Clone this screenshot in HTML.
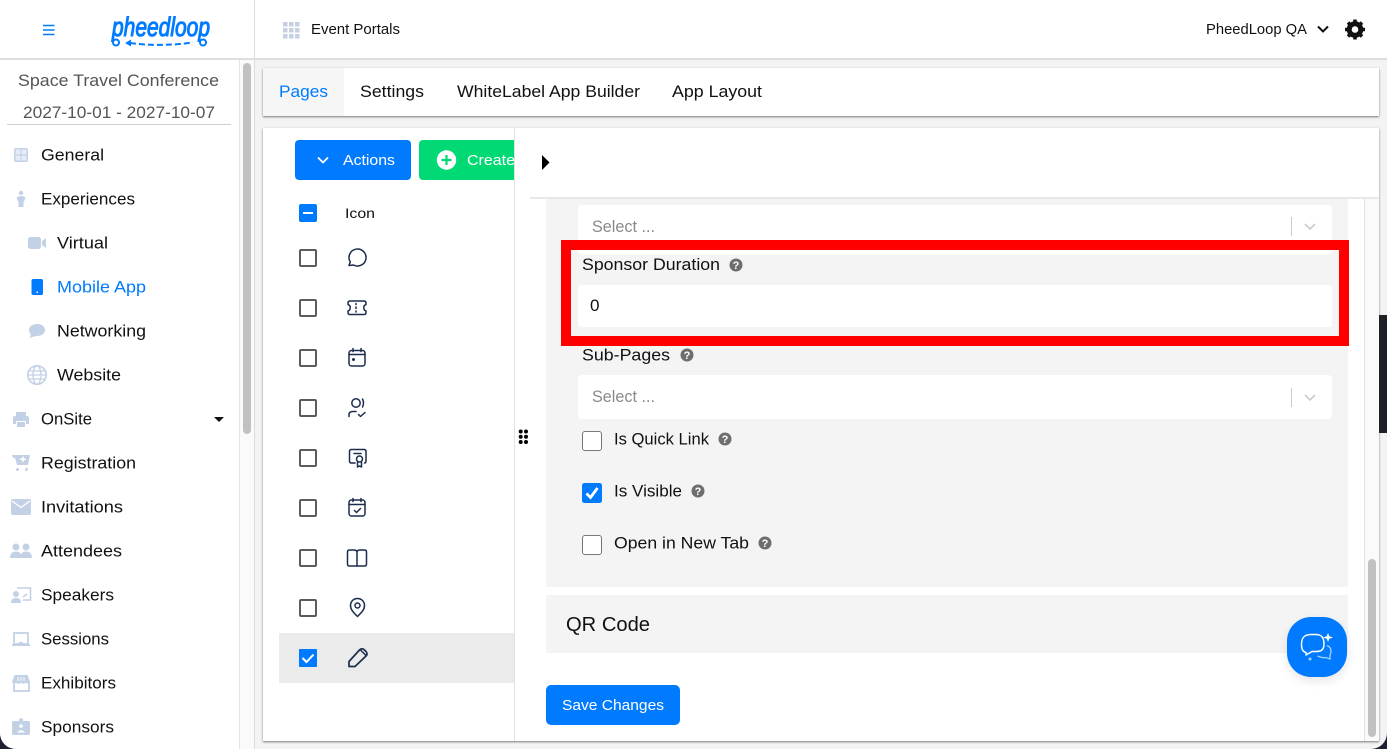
<!DOCTYPE html>
<html lang="en">
<head>
<meta charset="utf-8">
<title>Event Portals</title>
<style>
html,body{margin:0;padding:0;width:1387px;height:749px;overflow:hidden;background:#1d2030}
.b{position:absolute;box-sizing:border-box}
#page{position:absolute;left:0;top:0;width:1387px;height:749px;background:#f3f3f3;border-radius:0 0 16px 16px;overflow:hidden}
svg{position:absolute;left:0;top:0}
text{font-family:"Liberation Sans",sans-serif;font-size:16.5px;fill:#111}
.s14{font-size:14.5px}
.blue{fill:#007bff}
.w{fill:#fff}
.g{fill:#8a8a8a}
.ev{fill:#555}
.i{fill:#c3d1e6;stroke:none}
.o{fill:none;stroke:#c3d1e6;stroke-width:1.8}
.r{fill:none;stroke:#1c2c4c;stroke-width:1.5;stroke-linecap:round;stroke-linejoin:round}
.cb{fill:#fff;stroke:#5c5c5c;stroke-width:2}
.cf{fill:#fff;stroke:#777;stroke-width:1}
</style>
</head>
<body>
<div id="page">
  <div class="b" style="left:0;top:0;width:1387px;height:60px;background:#fff;border-bottom:2px solid #dedede"></div>
  <div class="b" style="left:254px;top:0;width:1px;height:749px;background:#dcdcdc"></div>
  <div class="b" style="left:0;top:60px;width:240px;height:689px;background:#fff;border-right:1px solid #e4e4e4"></div>
  <div class="b" style="left:240px;top:60px;width:14px;height:689px;background:#fafafa"></div>
  <div class="b" style="left:243px;top:63px;width:8px;height:371px;background:#c1c1c1;border-radius:4px"></div>
  <div class="b" style="left:7px;top:124px;width:224px;height:1px;background:#cfcfcf"></div>

  <div class="b" style="left:263px;top:68px;width:1116px;height:48px;background:#fff;box-shadow:0 1px 2px rgba(0,0,0,.5)"></div>
  <div class="b" style="left:263px;top:68px;width:81px;height:48px;background:#f6f6f6"></div>

  <div class="b" style="left:263px;top:128px;width:1116px;height:613px;background:#fff;box-shadow:0 1px 2px rgba(0,0,0,.5);overflow:hidden">
    <div class="b" style="left:32px;top:12px;width:116px;height:40px;background:#007bff;border-radius:4px"></div>
    <div class="b" style="left:156px;top:12px;width:100px;height:40px;background:#00d974;border-radius:4px"></div>
    <div class="b" style="left:16px;top:505px;width:235px;height:50px;background:#ebebeb"></div>
    <div class="b" style="left:251px;top:0;width:1px;height:613px;background:#e2e2e2"></div>
    <div class="b" style="left:252px;top:0;width:864px;height:613px;background:#fff"></div>
    <div class="b" style="left:267px;top:69px;width:849px;height:2px;background:#e8e8e8"></div>
    <div class="b" style="left:283px;top:71px;width:802px;height:388px;background:#f4f4f4"></div>
    <div class="b" style="left:315px;top:77px;width:754px;height:50px;background:#fff;border-radius:4px"></div>
    <div class="b" style="left:315px;top:157px;width:754px;height:42px;background:#fff;border-radius:3px"></div>
    <div class="b" style="left:315px;top:247px;width:754px;height:44px;background:#fff;border-radius:4px"></div>
    <div class="b" style="left:283px;top:467px;width:802px;height:58px;background:#f4f4f4"></div>
    <div class="b" style="left:283px;top:557px;width:134px;height:40px;background:#007bff;border-radius:5px"></div>
    <div class="b" style="left:1101px;top:71px;width:15px;height:542px;background:#fafafa;border-left:1px solid #e2e2e2"></div>
    <div class="b" style="left:1105px;top:431px;width:8px;height:178px;background:#c1c1c1;border-radius:4px"></div>
  </div>

  <div class="b" style="left:561px;top:240px;width:788px;height:106px;border:10px solid #f00"></div>
  <div class="b" style="left:1379px;top:315px;width:8px;height:118px;background:#1d2025"></div>
  <div class="b" style="left:1287px;top:617px;width:60px;height:60px;background:#007bff;border-radius:24px;box-shadow:0 4px 10px rgba(0,0,0,.1)"></div>

  <svg width="1387" height="749" viewBox="0 0 1387 749" xmlns="http://www.w3.org/2000/svg">
    <defs><clipPath id="cl"><rect x="263" y="128" width="251" height="100"/></clipPath></defs>

    <!-- header -->
    <path d="M43 25.500H54.500M43 30H54.500M43 34.500H54.500" stroke="#007bff" stroke-width="1.600" fill="none"/>
    <text x="112" y="36" textLength="98" lengthAdjust="spacingAndGlyphs" style="font-style:italic;font-size:27px;fill:#007bff;stroke:#007bff;stroke-width:1.100">pheedloop</text>
    <circle cx="116" cy="42.500" r="3" fill="none" stroke="#007bff" stroke-width="2"/>
    <circle cx="203" cy="42.500" r="3" fill="none" stroke="#007bff" stroke-width="2"/>
    <path d="M130 43Q160 47 193 42.500" fill="none" stroke="#007bff" stroke-width="2" stroke-dasharray="6 3"/>
    <path d="M125 43L131 39.500V46.500Z" fill="#007bff"/>
    <g fill="#c6d0e0">
      <rect x="283" y="22" width="4.500" height="4.500"/><rect x="289" y="22" width="4.500" height="4.500"/><rect x="295" y="22" width="4.500" height="4.500"/>
      <rect x="283" y="28" width="4.500" height="4.500"/><rect x="289" y="28" width="4.500" height="4.500"/><rect x="295" y="28" width="4.500" height="4.500"/>
      <rect x="283" y="34" width="4.500" height="4.500"/><rect x="289" y="34" width="4.500" height="4.500"/><rect x="295" y="34" width="4.500" height="4.500"/>
    </g>
    <text class="s14" x="311" y="34" textLength="89" lengthAdjust="spacingAndGlyphs">Event Portals</text>
    <text class="s14" x="1206" y="34" textLength="101" lengthAdjust="spacingAndGlyphs">PheedLoop QA</text>
    <path d="M1318 26.500L1323 31.500L1328 26.500" fill="none" stroke="#111" stroke-width="2"/>
    <g transform="translate(1355 29.500)">
      <circle r="5.800" fill="none" stroke="#111" stroke-width="5"/>
      <g stroke="#111" stroke-width="3.600">
        <path d="M0-10V-6M0 10V6M-10 0H-6M10 0H6M-7-7L-4-4M7 7L4 4M-7 7L-4 4M7-7L4-4"/>
      </g>
    </g>

    <!-- event -->
    <text class="ev" x="18" y="86" textLength="201" lengthAdjust="spacingAndGlyphs">Space Travel Conference</text>
    <text class="ev" x="23" y="118" textLength="192" lengthAdjust="spacingAndGlyphs">2027-10-01 - 2027-10-07</text>

    <!-- nav text -->
    <text x="41" y="160.500" textLength="63" lengthAdjust="spacingAndGlyphs">General</text>
    <text x="41" y="204.500" textLength="94" lengthAdjust="spacingAndGlyphs">Experiences</text>
    <text x="57" y="248.500" textLength="51" lengthAdjust="spacingAndGlyphs">Virtual</text>
    <text class="blue" x="57" y="292.500" textLength="89" lengthAdjust="spacingAndGlyphs">Mobile App</text>
    <text x="57" y="336.500" textLength="89" lengthAdjust="spacingAndGlyphs">Networking</text>
    <text x="57" y="380.500" textLength="64" lengthAdjust="spacingAndGlyphs">Website</text>
    <text x="41" y="424.500" textLength="51" lengthAdjust="spacingAndGlyphs">OnSite</text>
    <text x="41" y="468.500" textLength="95" lengthAdjust="spacingAndGlyphs">Registration</text>
    <text x="41" y="512.500" textLength="82" lengthAdjust="spacingAndGlyphs">Invitations</text>
    <text x="41" y="556.500" textLength="81" lengthAdjust="spacingAndGlyphs">Attendees</text>
    <text x="41" y="600.500" textLength="73" lengthAdjust="spacingAndGlyphs">Speakers</text>
    <text x="41" y="644.500" textLength="68" lengthAdjust="spacingAndGlyphs">Sessions</text>
    <text x="41" y="688.500" textLength="75" lengthAdjust="spacingAndGlyphs">Exhibitors</text>
    <text x="41" y="732.500" textLength="73" lengthAdjust="spacingAndGlyphs">Sponsors</text>

    <!-- nav icons -->
    <rect class="i" x="14" y="148" width="14" height="14" rx="2"/>
    <path d="M15.500 154.400H20.400V149.500H15.500ZM21.600 149.500V154.400H26.500V149.500ZM15.500 155.600V160.500H20.400V155.600ZM21.600 155.600V160.500H26.500V155.600Z" fill="#e6edf6"/>
    <circle class="i" cx="21" cy="193" r="2.200"/>
    <path class="i" d="M16.500 197.500Q21 194.500 25.500 197.500L24 201.500H23.500V207H18.500V201.500H18Z"/>
    <rect class="i" x="28" y="237" width="13" height="12" rx="2.500"/>
    <path class="i" d="M42 241L46 238V248L42 245Z"/>
    <rect class="blue" style="stroke:none" x="31.500" y="279" width="11.500" height="16" rx="1.800"/>
    <rect x="36.500" y="291.500" width="1.500" height="1.500" fill="#fff"/>
    <path class="i" d="M37 324C41.500 324 45 326.500 45 330C45 333.500 41.500 336 37 336L34 336.500L29.500 338L31 334.500C29.800 333.300 29 331.800 29 330C29 326.500 32.500 324 37 324Z"/>
    <circle cx="37" cy="375" r="9.200" fill="none" stroke="#c3d1e6" stroke-width="1.600"/>
    <ellipse cx="37" cy="375" rx="4" ry="9.200" fill="none" stroke="#c3d1e6" stroke-width="1.300"/>
    <path d="M28 375H46M29 371H45M29 379H45" stroke="#c3d1e6" stroke-width="1.200"/>
    <path class="i" d="M16 412H26V416H16ZM13 418Q13 416 15 416H27Q29 416 29 418V424H26V421H16V424H13Z"/>
    <rect class="i" x="17" y="422" width="8" height="5"/>
    <path d="M214 417H224L219 422Z" fill="#111"/>
    <path class="i" d="M12 455H30L28 465H17L15 458H13Z"/>
    <path d="M23 456.500V462M20 459.300H26" stroke="#fff" stroke-width="1.500"/>
    <circle class="i" cx="17.500" cy="469.500" r="1.500"/><circle class="i" cx="26.500" cy="469.500" r="1.500"/>
    <rect class="i" x="11" y="499" width="20" height="16" rx="2"/>
    <path d="M12 501L21 507.500L30 501" fill="none" stroke="#fff" stroke-width="1.300"/>
    <circle class="i" cx="16" cy="547" r="3.500"/><circle class="i" cx="26" cy="547" r="3.500"/>
    <path class="i" d="M10 558C10 553 13 551.500 16 551.500C19 551.500 21 553 21 555C21 553 23 551.500 26 551.500C29 551.500 32 553 32 558Z"/>
    <path d="M17 588H30.500V600H23" fill="none" stroke="#c3d1e6" stroke-width="1.600"/>
    <path d="M23 597L27 594" stroke="#c3d1e6" stroke-width="1.600"/>
    <circle class="i" cx="16" cy="594" r="3"/>
    <path class="i" d="M11 603C11 599 13 598 16 598C19 598 21 599 21 603Z"/>
    <rect class="o" x="14" y="633" width="14" height="11"/>
    <rect class="i" x="12" y="644" width="18" height="2"/>
    <rect class="i" x="19" y="642" width="4" height="1"/>
    <path d="M14 682V691H29V682" fill="none" stroke="#c3d1e6" stroke-width="1.800"/>
    <path class="i" d="M14.500 675H27.500L30 682Q28 685 26 682.500Q24 685 21 682.500Q18 685 16 682.500Q14 685 12 682Z"/>
    <path d="M18 677V681M21 677V681M24 677V681" stroke="#fff" stroke-width="1"/>
    <rect class="i" x="12" y="721" width="18" height="14" rx="1.500"/>
    <rect class="i" x="19" y="718.500" width="4" height="3"/>
    <circle cx="21" cy="726" r="1.800" fill="#fff"/>
    <path d="M17 732.500Q21 728 25 732.500Z" fill="#fff"/>

    <!-- tabs -->
    <text class="blue" x="279" y="97" textLength="49" lengthAdjust="spacingAndGlyphs">Pages</text>
    <text x="360" y="97" textLength="64" lengthAdjust="spacingAndGlyphs">Settings</text>
    <text x="457" y="97" textLength="183" lengthAdjust="spacingAndGlyphs">WhiteLabel App Builder</text>
    <text x="672" y="97" textLength="90" lengthAdjust="spacingAndGlyphs">App Layout</text>

    <!-- action buttons -->
    <path d="M318 157.500L323 162.500L328 157.500" fill="none" stroke="#fff" stroke-width="1.800"/>
    <text class="s14 w" x="343" y="165" textLength="52" lengthAdjust="spacingAndGlyphs">Actions</text>
    <circle cx="446.500" cy="160" r="9.700" fill="#fff"/>
    <path d="M446.500 155V165M441.500 160H451.500" stroke="#00d974" stroke-width="2.200"/>
    <text class="s14 w" x="467" y="165" textLength="48" lengthAdjust="spacingAndGlyphs" clip-path="url(#cl)">Create</text>

    <!-- list -->
    <rect x="299" y="204" width="18" height="18" rx="2" fill="#007bff"/>
    <rect x="303" y="212" width="10" height="2" fill="#fff"/>
    <text x="345" y="218" style="font-size:14px" textLength="30" lengthAdjust="spacingAndGlyphs">Icon</text>
    <rect class="cb" x="300" y="250" width="16" height="16" rx="1"/>
    <rect class="cb" x="300" y="300" width="16" height="16" rx="1"/>
    <rect class="cb" x="300" y="350" width="16" height="16" rx="1"/>
    <rect class="cb" x="300" y="400" width="16" height="16" rx="1"/>
    <rect class="cb" x="300" y="450" width="16" height="16" rx="1"/>
    <rect class="cb" x="300" y="500" width="16" height="16" rx="1"/>
    <rect class="cb" x="300" y="550" width="16" height="16" rx="1"/>
    <rect class="cb" x="300" y="600" width="16" height="16" rx="1"/>
    <rect x="299" y="649" width="18" height="18" rx="1" fill="#007bff"/>
    <path d="M302.500 658L306.500 662L313.500 654.500" fill="none" stroke="#fff" stroke-width="2"/>

    <!-- list icons -->
    <path class="r" d="M349 265.500L350.300 262A8.500 8.500 0 1 1 353.500 265Z"/>
    <path class="r" d="M350 301H364Q366 301 366 303V304.500C363 305.500 363 310 366 311V312.500Q366 314.500 364 314.500H350Q348 314.500 348 312.500V311C351 310 351 305.500 348 304.500V303Q348 301 350 301Z"/>
    <path class="r" d="M356 303.500V304.500M356 307V308.500M356 311V312"/>
    <rect class="r" x="349" y="350.500" width="16" height="15.500" rx="2.500"/>
    <path class="r" d="M349 354.500H365M353 348.500V351.500M361 348.500V351.500"/>
    <circle cx="353.500" cy="359.500" r="1.500" fill="#1c2c4c"/>
    <circle class="r" cx="356" cy="403" r="4.200"/>
    <path class="r" d="M362.500 399Q364.500 403 362.500 407M349 416.500V414.500Q349 411.500 353 411.500H356M358.500 414.500L360.500 416.500L365 412.500"/>
    <path class="r" d="M355 463H351.500Q349.500 463 349.500 461V451.500Q349.500 449.500 351.500 449.500H364Q366 449.500 366 451.500V461Q366 463 364.500 463"/>
    <path class="r" d="M354 453.500H361"/>
    <circle class="r" cx="359.500" cy="459" r="3"/>
    <path class="r" d="M357.500 462V467L359.500 466L361.500 467V462"/>
    <rect class="r" x="349" y="500" width="16" height="16" rx="2.500"/>
    <path class="r" d="M349 504.500H365M353 498.500V501.500M361 498.500V501.500M354.500 510.500L356.500 512.500L360.500 508.500"/>
    <path class="r" d="M357 552.500V566M357 552.500Q357 550 354.500 550H349.500Q347.500 550 347.500 552V564Q347.500 566 349.500 566H364.500Q366.500 566 366.500 564V552Q366.500 550 364.500 550H359.500Q357 550 357 552.500Z"/>
    <path class="r" d="M357.500 616.500C353 612 350.500 609.500 350.500 605.500C350.500 601.500 353.500 598.500 357.500 598.500C361.500 598.500 364.500 601.500 364.500 605.500C364.500 609.500 362 612 357.500 616.500Z"/>
    <circle class="r" cx="357.500" cy="605.500" r="2.500"/>
    <path class="r" style="stroke-width:1.700" d="M349 666.500V661.500L359.500 650Q362 647.500 364.500 650L366 651.500Q368 654 366 656L355 666.500Z"/>
    <path class="r" d="M360.500 650L365.500 655"/>

    <!-- splitter / toggle -->
    <g fill="#000">
      <circle cx="520.700" cy="431.500" r="2"/><circle cx="526" cy="431.500" r="2"/>
      <circle cx="520.700" cy="436.800" r="2"/><circle cx="526" cy="436.800" r="2"/>
      <circle cx="520.700" cy="442" r="2"/><circle cx="526" cy="442" r="2"/>
    </g>
    <path d="M542 155V170L549.500 162.500Z" fill="#000"/>

    <!-- form -->
    <text class="g" x="592" y="232" textLength="63" lengthAdjust="spacingAndGlyphs">Select ...</text>
    <path d="M1291.500 217V236" stroke="#ccc"/>
    <path d="M1305 224L1310 229L1315 224" fill="none" stroke="#ccc" stroke-width="1.600"/>
    <text x="582" y="270" textLength="138" lengthAdjust="spacingAndGlyphs">Sponsor Duration</text>
    <circle cx="736" cy="265" r="6.500" fill="#6e6e6e"/>
    <text class="w" x="736" y="269" text-anchor="middle" style="font-size:11px;font-weight:bold">?</text>
    <text x="590" y="311" textLength="9.500" lengthAdjust="spacingAndGlyphs">0</text>
    <text x="582" y="360.500" textLength="88" lengthAdjust="spacingAndGlyphs">Sub-Pages</text>
    <circle cx="687" cy="355" r="6.500" fill="#6e6e6e"/>
    <text class="w" x="687" y="359" text-anchor="middle" style="font-size:11px;font-weight:bold">?</text>
    <text class="g" x="592" y="402" textLength="63" lengthAdjust="spacingAndGlyphs">Select ...</text>
    <path d="M1291.500 388V407" stroke="#ccc"/>
    <path d="M1305 395L1310 400L1315 395" fill="none" stroke="#ccc" stroke-width="1.600"/>

    <rect class="cf" x="582.500" y="431.500" width="19" height="19" rx="2.500"/>
    <text x="614" y="444.500" textLength="95" lengthAdjust="spacingAndGlyphs">Is Quick Link</text>
    <circle cx="725" cy="439" r="6.500" fill="#6e6e6e"/>
    <text class="w" x="725" y="443" text-anchor="middle" style="font-size:11px;font-weight:bold">?</text>

    <rect x="582" y="483" width="20" height="20" rx="2.500" fill="#007bff"/>
    <path d="M586.500 493.500L590.500 497.500L597.500 488" fill="none" stroke="#fff" stroke-width="2.800"/>
    <text x="614" y="496.500" textLength="68" lengthAdjust="spacingAndGlyphs">Is Visible</text>
    <circle cx="698" cy="491" r="6.500" fill="#6e6e6e"/>
    <text class="w" x="698" y="495" text-anchor="middle" style="font-size:11px;font-weight:bold">?</text>

    <rect class="cf" x="582.500" y="535.500" width="19" height="19" rx="2.500"/>
    <text x="614" y="548.500" textLength="135" lengthAdjust="spacingAndGlyphs">Open in New Tab</text>
    <circle cx="765" cy="543" r="6.500" fill="#6e6e6e"/>
    <text class="w" x="765" y="547" text-anchor="middle" style="font-size:11px;font-weight:bold">?</text>

    <text x="566" y="631" style="font-size:20px" textLength="84" lengthAdjust="spacingAndGlyphs">QR Code</text>
    <text class="s14 w" x="562" y="710" textLength="102" lengthAdjust="spacingAndGlyphs">Save Changes</text>

    <!-- chat -->
    <path d="M1306 652.500C1302 651.500 1301.500 648 1301.500 644.500C1301.500 638 1304 634.500 1311 634.500H1316C1322 634.500 1324 638 1324 644C1324 650 1321 651.500 1316 651.500H1312L1306 655Z" fill="none" stroke="#fff" stroke-width="1.500" stroke-linejoin="round"/>
    <path d="M1328 633L1329.300 636.200L1333 637.500L1329.300 638.800L1328 642L1326.700 638.800L1323 637.500L1326.700 636.200Z" fill="#fff"/>
    <path d="M1327 645.500C1331 647 1332 651 1330 655L1330 659L1326 657.500C1324 658 1321 657.500 1317.500 656" fill="none" stroke="#a8d0ff" stroke-width="1.300"/>
    <circle cx="1310" cy="659" r="1.500" fill="#a8d0ff"/>
  </svg>
</div>
</body>
</html>
